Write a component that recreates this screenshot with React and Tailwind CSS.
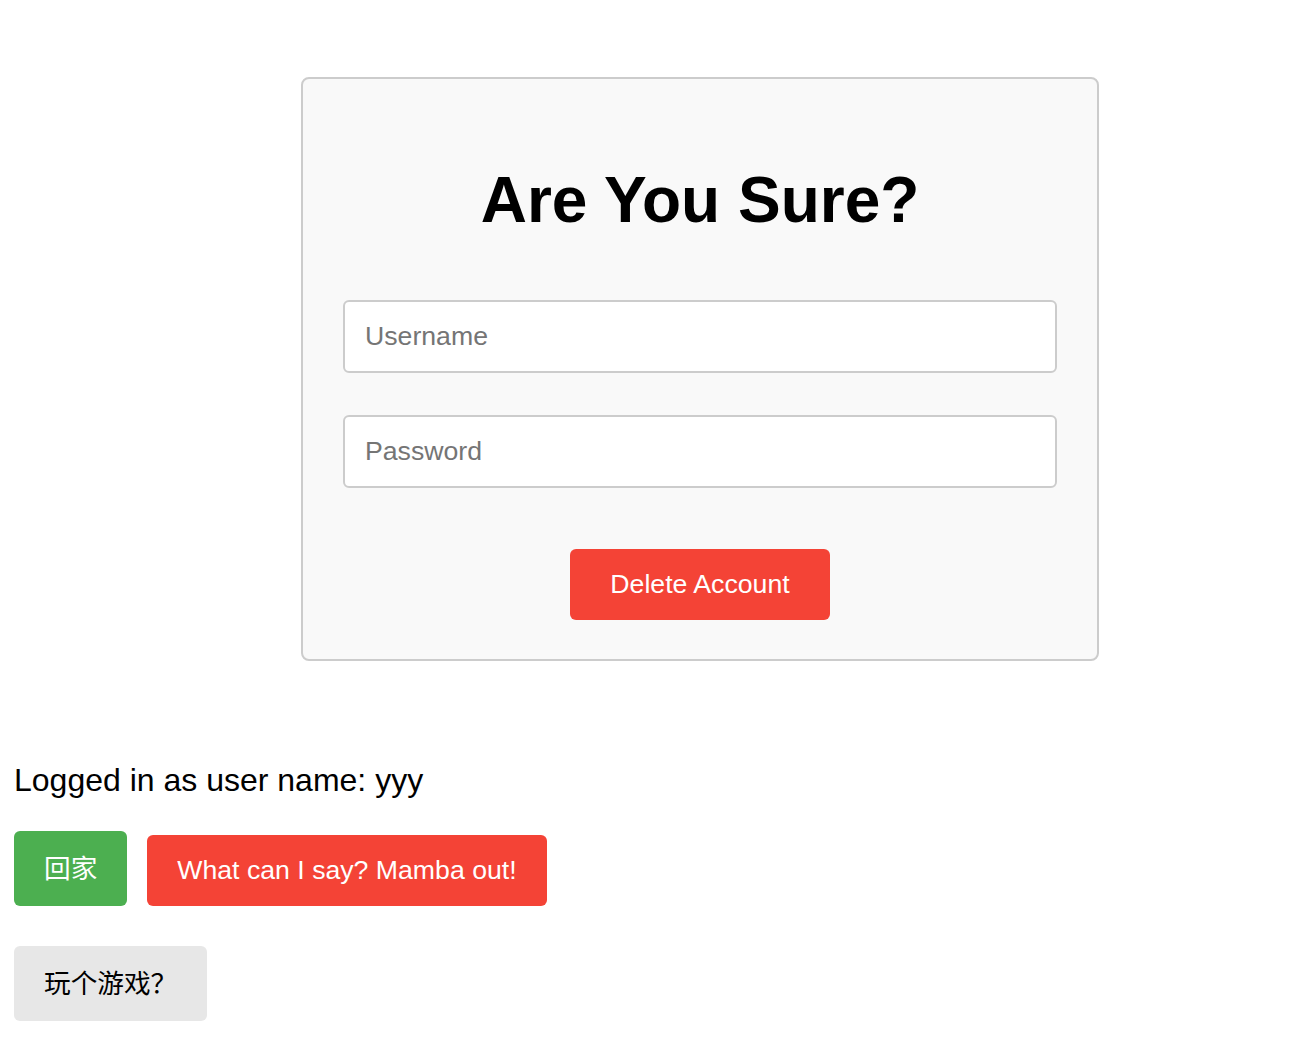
import React, { useState } from 'react';

const App = () => {
  const [username, setUsername] = useState('');
  const [password, setPassword] = useState('');

  return (
    <div className="bg-white text-black min-h-[1059px] pt-[77px] font-['Liberation_Sans','Noto_Sans_CJK_SC',sans-serif]">
      <div className="ml-[301px] w-[798px] border-2 border-[#cccccc] rounded-[8px] bg-[#f9f9f9] px-[40px] pt-[84px] pb-[39px] flex flex-col items-center">
        <h1 className="text-[64px] leading-[74px] font-bold text-center">Are You Sure?</h1>

        <input
          className="mt-[63px] w-full h-[73px] bg-white border-2 border-[#cccccc] rounded-[6px] px-[20px] text-[26.67px] outline-none placeholder:text-[#757575]"
          type="text"
          placeholder="Username"
          value={username}
          onChange={(e) => setUsername(e.target.value)}
        />
        <input
          className="mt-[42px] w-full h-[73px] bg-white border-2 border-[#cccccc] rounded-[6px] px-[20px] text-[26.67px] outline-none placeholder:text-[#757575]"
          type="password"
          placeholder="Password"
          value={password}
          onChange={(e) => setPassword(e.target.value)}
        />

        <button className="mt-[61px] bg-[#f44336] text-white text-[26.67px] leading-[31px] px-[40px] py-[20px] rounded-[6px]">
          Delete Account
        </button>
      </div>

      <div className="pl-[14px] mt-[99px]">
        <p className="text-[32px] leading-[40px]">Logged in as user name: yyy</p>

        <div className="flex items-end gap-[20px] mt-[31px]">
          <button className="bg-[#4caf50] text-white text-[26.67px] leading-[35px] px-[30px] pt-[21px] pb-[19px] rounded-[6px]">
            回家
          </button>
          <button className="bg-[#f44336] text-white text-[26.67px] leading-[31px] px-[30px] py-[20px] rounded-[6px]">
            What can I say? Mamba out!
          </button>
        </div>

        <button className="mt-[40px] bg-[#e7e7e7] text-black text-[26.67px] leading-[35px] px-[30px] pt-[21px] pb-[19px] rounded-[6px]">
          玩个游戏？
        </button>
      </div>
    </div>
  );
};

export default App;
